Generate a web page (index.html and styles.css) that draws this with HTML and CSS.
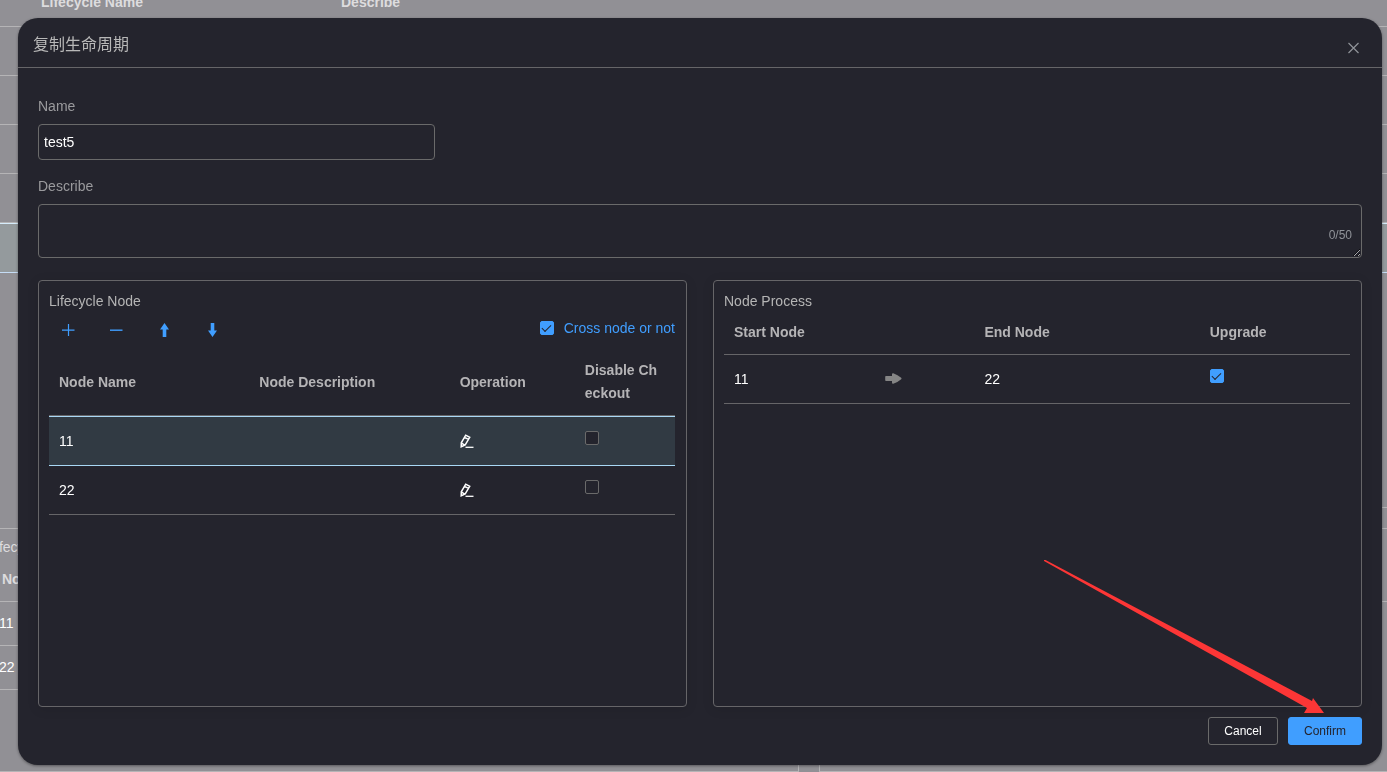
FILE: index.html
```html
<!DOCTYPE html>
<html lang="en">
<head>
<meta charset="utf-8">
<title>Lifecycle</title>
<link rel="stylesheet" href="styles.css">
</head>
<body>
<main class="page" aria-hidden="true">
  <table class="list">
    <colgroup><col class="list-gap"><col class="list-name"><col></colgroup>
    <thead><tr><th></th><th>Lifecycle Name</th><th>Describe</th></tr></thead>
    <tbody>
      <tr><td colspan="3"></td></tr>
      <tr><td colspan="3"></td></tr>
      <tr><td colspan="3"></td></tr>
      <tr><td colspan="3"></td></tr>
      <tr class="current"><td colspan="3"></td></tr>
    </tbody>
  </table>
  <div class="details">
    <section class="detail detail-nodes">
      <div class="detail-title">Lifecycle Node</div>
      <table class="detail-table">
        <thead><tr><th>No</th><th>Node Name</th></tr></thead>
        <tbody><tr><td>11</td><td></td></tr><tr><td>22</td><td></td></tr></tbody>
      </table>
    </section>
    <section class="detail detail-process">
      <div class="detail-bar"></div>
      <div class="detail-title">Node Process</div>
      <table class="detail-table">
        <thead><tr><th>Start Node</th><th>End Node</th></tr></thead>
      </table>
    </section>
  </div>
</main>

<div class="overlay">
  <form class="dialog" role="dialog" aria-labelledby="dialog-title">
    <header class="dialog-header">
      <h1 class="dialog-title" id="dialog-title">复制生命周期</h1>
      <button class="close" type="button" aria-label="Close">
        <svg width="12" height="12" viewBox="0 0 12 12" fill="none" stroke="currentColor" stroke-width="1.200"><path d="M.5 1l10 10M10.500 1L.5 11"/></svg>
      </button>
    </header>
    <div class="dialog-body">
      <div class="field">
        <label class="label" for="name">Name</label>
        <input class="input" id="name" type="text" value="test5">
      </div>
      <div class="field">
        <label class="label" for="describe">Describe</label>
        <div class="textarea-wrap">
          <textarea class="textarea" id="describe" maxlength="50"></textarea>
          <span class="count">0/50</span>
        </div>
      </div>
      <div class="panels">
        <section class="panel">
          <h2 class="panel-title">Lifecycle Node</h2>
          <div class="toolbar">
            <div class="tools">
              <button class="tool" type="button" aria-label="Add"><svg width="14" height="14" viewBox="0 0 14 14" fill="none" stroke="currentColor" stroke-width="1.200"><path d="M7.500 1v12M1 7.200h12.500"/></svg></button>
              <button class="tool" type="button" aria-label="Remove"><svg width="14" height="14" viewBox="0 0 14 14" fill="none" stroke="currentColor" stroke-width="1.400"><path d="M1 7.200h12.500"/></svg></button>
              <button class="tool" type="button" aria-label="Move up"><svg width="14" height="14" viewBox="0 0 14 14" fill="currentColor"><path d="M7.500 0L12 6.500H9.300V14H5.700V6.500H3z"/></svg></button>
              <button class="tool" type="button" aria-label="Move down"><svg width="14" height="14" viewBox="0 0 14 14" fill="currentColor"><path d="M7.500 14L12 7.500H9.300V0H5.700V7.500H3z"/></svg></button>
            </div>
            <label class="check-label"><input class="check" type="checkbox" checked>Cross node or not</label>
          </div>
          <table class="table">
            <colgroup><col class="w32"><col class="w32"><col class="w20"><col class="w16"></colgroup>
            <thead><tr><th>Node Name</th><th>Node Description</th><th>Operation</th><th>Disable Checkout</th></tr></thead>
            <tbody>
              <tr class="selected">
                <td>11</td><td></td>
                <td><button class="edit" type="button" aria-label="Edit 11"><svg width="14" height="14" viewBox="0 0 14 14" fill="none" stroke="currentColor" stroke-width="1.500"><path d="M1.200 12.800l.1-4L5.700 1.200l4 2.100L5.200 11zM4.600 3.400l3.800 2M1.500 9.200l3.400 2"/><path d="M5.500 13.300h8" stroke-width="1.300"/></svg></button></td>
                <td><input class="check" type="checkbox" aria-label="Disable checkout for 11"></td>
              </tr>
              <tr>
                <td>22</td><td></td>
                <td><button class="edit" type="button" aria-label="Edit 22"><svg width="14" height="14" viewBox="0 0 14 14" fill="none" stroke="currentColor" stroke-width="1.500"><path d="M1.200 12.800l.1-4L5.700 1.200l4 2.100L5.200 11zM4.600 3.400l3.800 2M1.500 9.200l3.400 2"/><path d="M5.500 13.300h8" stroke-width="1.300"/></svg></button></td>
                <td><input class="check" type="checkbox" aria-label="Disable checkout for 22"></td>
              </tr>
            </tbody>
          </table>
        </section>
        <section class="panel">
          <h2 class="panel-title">Node Process</h2>
          <table class="table">
            <colgroup><col class="w24"><col class="w16"><col class="w36"><col class="w24"></colgroup>
            <thead><tr><th>Start Node</th><th></th><th>End Node</th><th>Upgrade</th></tr></thead>
            <tbody>
              <tr>
                <td>11</td>
                <td><svg class="arrow" width="18" height="12" viewBox="0 0 18 12" fill="currentColor"><path d="M2 3h6V1.200Q8.100 0 9.300.3q4.500 1.500 7.900 4.500.8.700 0 1.400-3.400 3-7.900 4.500-1.200.3-1.300-.9V8H2Q1.200 8 1.200 7.200V3.800Q1.200 3 2 3z"/></svg></td>
                <td>22</td>
                <td><input class="check" type="checkbox" aria-label="Upgrade 11 to 22" checked></td>
              </tr>
            </tbody>
          </table>
        </section>
      </div>
      <footer class="actions">
        <button class="btn" type="button">Cancel</button>
        <button class="btn btn-primary" type="submit">Confirm</button>
      </footer>
    </div>
    <svg class="pointer" width="280" height="153" viewBox="0 0 280 153" fill="#fc3636"><path d="M0 0h1.500L268 141l1-3 11 15h-20l3-5L0 1z"/></svg>
  </form>
</div>
</body>
</html>
```

FILE: styles.css
```css
* {
  box-sizing: border-box;
}

body {
  margin: 0;
  min-height: 100vh;
  overflow: hidden;
  background: #919095;
  color: #fff;
  font: 14px/23px "Liberation Sans", "Noto Sans CJK SC", sans-serif;
}

button {
  padding: 0;
  border: 0;
  background: none;
  color: inherit;
  font: inherit;
}

svg {
  display: block;
}

table {
  width: 100%;
  table-layout: fixed;
  border-spacing: 0;
}

th {
  text-align: left;
}

/* Page behind the dialog */
.page {
  display: flex;
  flex-direction: column;
  height: 100vh;
  overflow: hidden;
}

.list {
  margin-top: -10px;
}

.list-gap {
  width: 31px;
}

.list-name {
  width: 300px;
}

.list th {
  height: 37px;
  padding: 0 10px 12px;
  border-bottom: 1px solid #b5b4b6;
  color: #dddcde;
  line-height: 24px;
}

.list td {
  height: 49px;
  border-bottom: 1px solid #b5b4b6;
}

.list .current td {
  height: 50px;
  border-top: 1px solid #d5ecfb;
  border-bottom-color: #c5dcf5;
  background: #949a9d;
}

.details {
  display: flex;
  flex: 1;
  gap: 20px;
  margin: 234px 0 0 -23px;
}

.detail {
  flex: 1;
  border: 1px solid #b5b4b6;
}

.detail-nodes {
  flex: 0 0 822px;
  margin-top: 21px;
}

.detail-process {
  margin-right: -22px;
}

.detail-bar {
  height: 21px;
  border-bottom: 1px solid #b5b4b6;
}

.detail-title {
  padding: 7px 0 0 10px;
  color: #dddcde;
}

.detail-table th,
.detail-table td {
  height: 44px;
  padding: 0 0 0 21px;
  border-bottom: 1px solid #b5b4b6;
}

.detail-table th {
  height: 43px;
  padding: 0 0 2px 24px;
  color: #dddcde;
}

/* Dialog */
.overlay {
  position: fixed;
  inset: 0;
  display: flex;
  padding: 18px 5px 7px 18px;
}

.dialog {
  position: relative;
  display: flex;
  flex: 1;
  flex-direction: column;
  border-radius: 20px;
  background: #24242d;
  box-shadow: 0 1px 3px rgba(0, 0, 0, 0.4);
}

.dialog-header {
  display: flex;
  align-items: center;
  justify-content: space-between;
  height: 50px;
  padding: 4px 22px 0 15px;
  border-bottom: 1px solid #666568;
}

.dialog-title {
  margin: 0;
  color: #b8b8b8;
  font-size: 16px;
  font-weight: 400;
}

.close {
  margin-top: 6px;
  color: #909399;
}

.dialog-body {
  display: flex;
  flex: 1;
  flex-direction: column;
  padding: 20px;
}

.field {
  display: flex;
  flex-direction: column;
  margin-bottom: 8px;
}

.label {
  color: #9a9a9d;
  line-height: 36px;
}

.input,
.textarea {
  display: block;
  width: 100%;
  border: 1px solid #6a6a6a;
  border-radius: 4px;
  background: transparent;
  color: #fff;
  color-scheme: dark;
  font: inherit;
}

.input {
  width: 30%;
  height: 36px;
  padding: 0 5px;
}

.textarea-wrap {
  position: relative;
}

.textarea {
  height: 54px;
  padding: 5px;
  resize: vertical;
}

.count {
  position: absolute;
  right: 10px;
  bottom: 11px;
  color: #909399;
  font-size: 12px;
}

.panels {
  display: grid;
  flex: 1;
  grid-template-columns: 1fr 1fr;
  gap: 26px;
  margin-top: 14px;
}

.panel {
  padding: 10px 11px 10px 10px;
  border: 1px solid #666568;
  border-radius: 4px;
  box-shadow: 0 2px 12px rgba(0, 0, 0, 0.1);
}

.panel-title {
  margin: 0;
  color: #b5b5b5;
  font-size: 14px;
  font-weight: 400;
  line-height: 20px;
}

.toolbar {
  display: flex;
  align-items: flex-start;
  justify-content: space-between;
  height: 38px;
  padding-top: 2px;
  color: #409eff;
}

.tools {
  display: flex;
  gap: 10px;
}

.tool {
  display: flex;
  align-items: center;
  justify-content: center;
  width: 38px;
  height: 34px;
}

.check-label {
  display: flex;
  align-items: center;
  gap: 10px;
  height: 30px;
}

.check {
  display: block;
  width: 14px;
  height: 14px;
  margin: 0;
  border: 1px solid #6a6a6a;
  border-radius: 2px;
  appearance: none;
  background: #24242d;
}

.check:checked {
  border-color: #409eff;
  background: #409eff;
}

.check:checked::after {
  display: block;
  width: 4px;
  height: 8px;
  margin: 1px 0 0 4px;
  border: solid #24242d;
  border-width: 0 1px 1px 0;
  content: "";
  transform: rotate(45deg);
  transform-origin: center 3px;
}

.table th {
  padding: 10px 12px 10px 10px;
  border-bottom: 1px solid #666568;
  color: #b5b4b6;
  word-break: break-all;
}

.table td {
  height: 49px;
  padding: 0 10px;
  border-bottom: 1px solid #666568;
}

.table td .check {
  margin-bottom: 6px;
}

.table .selected td {
  height: 50px;
  border-top: 1px solid #a9d8f5;
  border-bottom-color: #a9d8f5;
  background: #313a43;
}

.edit {
  display: block;
}

.arrow {
  color: #858585;
}

.w16 { width: 16%; }
.w20 { width: 20%; }
.w24 { width: 24%; }
.w32 { width: 32%; }
.w36 { width: 36%; }

.actions {
  display: flex;
  justify-content: flex-end;
  gap: 10px;
  margin-top: 10px;
}

.btn {
  min-width: 70px;
  height: 28px;
  padding: 0 15px;
  border: 1px solid #6a6a6a;
  border-radius: 3px;
  font-size: 12px;
}

.btn-primary {
  border-color: #409eff;
  background: #409eff;
  color: #24242d;
}

/* Arrow that points at the confirm button */
.pointer {
  position: absolute;
  right: 58px;
  bottom: 52px;
  pointer-events: none;
}
```
